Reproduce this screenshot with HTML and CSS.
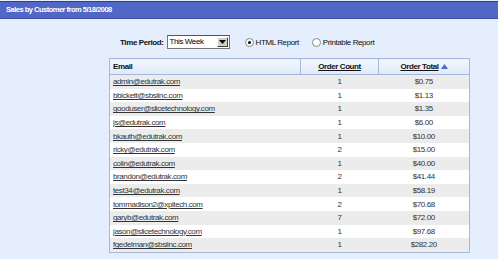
FILE: index.html
```html
<!DOCTYPE html>
<html>
<head>
<meta charset="utf-8">
<link rel="stylesheet" href="styles.css">
</head>
<body>
<div class="titlebar">Sales by Customer from 5/18/2008</div>
<div class="controls">
  <span class="label">Time Period:</span>
  <span class="select"><span class="select-val">This Week</span><span class="select-btn"><svg width="7" height="4" viewBox="0 0 7 4"><path d="M0 0H7L3.5 4Z" fill="#000"/></svg></span></span>
  <span class="radio-opt"><span class="radio checked"></span>HTML Report</span>
  <span class="radio-opt"><span class="radio"></span>Printable Report</span>
</div>
<table class="report">
  <thead>
    <tr><th class="c-email">Email</th><th class="c-count"><u>Order Count</u></th><th class="c-total"><u>Order Total</u><svg class="sort" width="7" height="5" viewBox="0 0 7 5"><path d="M0 5L3.5 0L7 5Z" fill="#4a6ec8"/></svg></th></tr>
  </thead>
  <tbody>
    <tr><td><u>admin@edutrak.com</u></td><td class="n">1</td><td class="n">$0.75</td></tr>
    <tr><td><u>bbickett@sbsiinc.com</u></td><td class="n">1</td><td class="n">$1.13</td></tr>
    <tr><td><u>gooduser@slicetechnology.com</u></td><td class="n">1</td><td class="n">$1.35</td></tr>
    <tr><td><u>js@edutrak.com</u></td><td class="n">1</td><td class="n">$6.00</td></tr>
    <tr><td><u>bkauth@edutrak.com</u></td><td class="n">1</td><td class="n">$10.00</td></tr>
    <tr><td><u>ricky@edutrak.com</u></td><td class="n">2</td><td class="n">$15.00</td></tr>
    <tr><td><u>colin@edutrak.com</u></td><td class="n">1</td><td class="n">$40.00</td></tr>
    <tr><td><u>brandon@edutrak.com</u></td><td class="n">2</td><td class="n">$41.44</td></tr>
    <tr><td><u>test34@edutrak.com</u></td><td class="n">1</td><td class="n">$58.19</td></tr>
    <tr><td><u>tommadison2@xpitech.com</u></td><td class="n">2</td><td class="n">$70.68</td></tr>
    <tr><td><u>garyb@edutrak.com</u></td><td class="n">7</td><td class="n">$72.00</td></tr>
    <tr><td><u>jason@slicetechnology.com</u></td><td class="n">1</td><td class="n">$97.68</td></tr>
    <tr><td><u>fgedelman@sbsiinc.com</u></td><td class="n">1</td><td class="n">$282.20</td></tr>
  </tbody>
</table>
</body>
</html>
```
FILE: styles.css
```css
html, body {
  margin: 0;
  padding: 0;
  background: #e4eefc;
  font-family: "Liberation Sans", Arial, sans-serif;
  font-size: 8px;
  letter-spacing: -0.4px;
  color: #333;
}
.titlebar {
  height: 16px;
  line-height: 16px;
  background: #5167c6;
  border-top: 1px solid #2e3f8e;
  border-bottom: 1px solid #3a4ea6;
  margin-top: 1px;
  color: #fff;
  font-weight: bold;
  font-size: 7.5px;
  letter-spacing: -0.5px;
  padding-left: 6px;
}
.controls {
  display: flex;
  align-items: center;
  margin-top: 16px;
  padding-left: 120px;
  height: 14px;
  color: #111;
}
.label {
  font-weight: bold;
  margin-right: 3px;
}
.select {
  display: flex;
  width: 63px;
  height: 14px;
  box-sizing: border-box;
  border: 1px solid #777;
  border-top-color: #555;
  background: #fff;
  margin-right: 15px;
}
.select-val {
  flex: 1;
  padding-left: 2px;
  line-height: 12px;
  color: #000;
}
.select-btn {
  width: 11px;
  height: 10px;
  margin: 1px;
  box-sizing: border-box;
  background: #d4d0c8;
  border: 1px solid;
  border-color: #fff #404040 #404040 #fff;
  display: flex;
  align-items: center;
  justify-content: center;
}
.radio-opt {
  display: flex;
  align-items: center;
  margin-right: 13px;
}
.radio {
  width: 7px;
  height: 7px;
  border-radius: 50%;
  border: 1px solid #888;
  background: #fff;
  margin-right: 2px;
  position: relative;
}
.radio.checked::after {
  content: "";
  position: absolute;
  left: 2px;
  top: 2px;
  width: 3px;
  height: 3px;
  border-radius: 50%;
  background: #000;
}
.report {
  margin-top: 9px;
  margin-left: 109px;
  width: 361px;
  border-collapse: collapse;
  border: 1px solid #a5b8dc;
  background: #fff;
}
.report th {
  height: 15px;
  padding: 0 3px;
  font-weight: bold;
  color: #111;
  background: linear-gradient(#f4f8fe, #dfe9fa);
  border: 1px solid #a5b8dc;
  text-align: center;
}
.report th.c-email {
  text-align: left;
  width: 184px;
}
.report th.c-count {
  width: 71px;
}
.sort {
  margin-left: 2px;
  vertical-align: 0;
}
.report td {
  height: 13.6px;
  padding: 0 3px;
  color: #333;
}
.report td.n {
  text-align: center;
}
.report tbody tr:nth-child(odd) td {
  background: #ececec;
}
```
